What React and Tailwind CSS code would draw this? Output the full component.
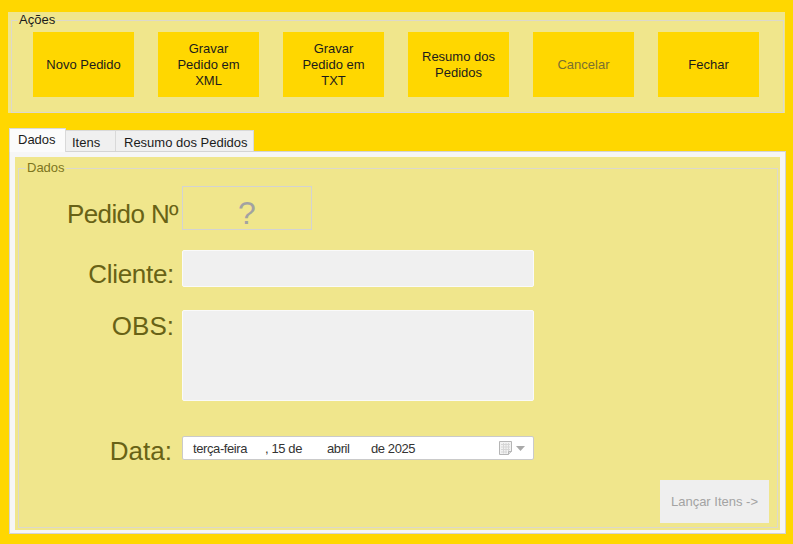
export default function App() {
  const buttons = [
    { lines: ["Novo Pedido"] },
    { lines: ["Gravar", "Pedido em", "XML"] },
    { lines: ["Gravar", "Pedido em", "TXT"] },
    { lines: ["Resumo dos", "Pedidos"] },
    { lines: ["Cancelar"], disabled: true },
    { lines: ["Fechar"] },
  ];
  return (
    <div className="w-[793px] h-[544px] bg-[#FFD700] font-['Liberation_Sans',Arial,sans-serif] text-[13px] text-[#1b1b1b] flex flex-col pt-[12px] pl-[8px] overflow-hidden">
      {/* Ações */}
      <div className="w-[777px] h-[101px] bg-[#F0E68C] pt-[8px] pl-[3px] shrink-0">
        <div className="relative w-[773px] h-[93px] border border-[#dcd9cc]">
          <span className="absolute left-[6px] top-[-9px] px-[1px] bg-[#F0E68C] leading-[15px] text-[#1b1b1b]">
            Ações
          </span>
          <div className="flex gap-[24px] pl-[21px] pt-[11px]">
            {buttons.map((b, i) => (
              <div
                key={i}
                className={
                  "w-[101px] h-[65px] bg-[#FFD700] flex flex-col items-center justify-center text-center leading-[16px] " +
                  (b.disabled ? "text-[#7a7030]" : "text-[#1b1b1b]")
                }
              >
                {b.lines.map((l, j) => (
                  <span key={j}>{l}</span>
                ))}
              </div>
            ))}
          </div>
        </div>
      </div>

      {/* Tabs */}
      <div className="mt-[15px] ml-[1px] flex items-end h-[23px] relative z-10 shrink-0">
        <div className="w-[57px] h-[24px] mb-[-1px] bg-[#fbfbfb] border border-b-0 border-[#d9d9d9] pl-[8px] pt-[3px] leading-[15px]">
          Dados
        </div>
        <div className="w-[50px] h-[21px] bg-[#f0f0f0] border-t border-r border-[#d9d9d9] pl-[6px] pt-[4px] leading-[15px]">
          Itens
        </div>
        <div className="w-[138px] h-[21px] bg-[#f0f0f0] border-t border-r border-[#d9d9d9] pl-[8px] pt-[4px] leading-[15px]">
          Resumo dos Pedidos
        </div>
      </div>

      {/* Tab panel */}
      <div className="ml-[1px] w-[777px] h-[383px] border border-[#d4d4d4] bg-[#f6f6f6] pt-[5px] pl-[5px] pr-[5px] pb-[3px] shrink-0">
        <div className="w-full h-full bg-[#F0E68C] pt-[11px] pl-[3px]">
          <div className="relative w-[760px] h-[360px] border border-[#dcd9cc] flex flex-col">
            <span className="absolute left-[7px] top-[-9px] px-[1px] bg-[#F0E68C] leading-[15px] text-[#7d7520]">
              Dados
            </span>

            {/* Pedido Nº */}
            <div className="flex mt-[17px]">
              <div className="w-[159px] text-right text-[26px] leading-[26px] tracking-[-0.6px] text-[#686216] mt-[15px]">
                Pedido Nº
              </div>
              <div className="ml-[4px] w-[130px] h-[44px] border border-[#d3d3d3] flex items-center justify-center pt-[10px] text-[32px] leading-[32px] text-[#a2a2a2]">
                ?
              </div>
            </div>

            {/* Cliente */}
            <div className="flex mt-[20px]">
              <div className="w-[159px] pr-[4px] text-right text-[26px] leading-[26px] tracking-[-0.3px] text-[#686216] mt-[11px]">
                Cliente:
              </div>
              <div className="ml-[4px] w-[352px] h-[37px] bg-[#f0f0f0] border border-[#fafafa] rounded-[2px]" />
            </div>

            {/* OBS */}
            <div className="flex mt-[23px]">
              <div className="w-[159px] pr-[4px] text-right text-[26px] leading-[26px] text-[#686216] mt-[3px]">
                OBS:
              </div>
              <div className="ml-[4px] w-[352px] h-[91px] bg-[#f0f0f0] border border-[#fafafa] rounded-[2px]" />
            </div>

            {/* Data */}
            <div className="flex mt-[35px] h-[28px]">
              <div className="w-[159px] pr-[6px] text-right text-[26px] leading-[26px] text-[#686216] mt-[2px]">
                Data:
              </div>
              <div className="ml-[4px] w-[352px] h-[24px] bg-white border border-[#cacaca] rounded-[2px] flex items-center pl-[10px] text-[13px] text-[#333] leading-[15px]">
                <span className="inline-block w-[72px] tracking-[-0.4px]">terça-feira</span>
                <span className="inline-block w-[62px] tracking-[-0.4px]">, 15 de</span>
                <span className="inline-block w-[44px] tracking-[-0.4px]">abril</span>
                <span className="inline-block tracking-[-0.4px]">de 2025</span>
                <div className="ml-auto mr-[8px] flex items-center gap-[3px]">
                  <svg width="14" height="15" viewBox="0 0 14 15">
                    <path d="M0.5 0.5 H12.5 V10.5 L9.5 13.5 H0.5 Z" fill="#f2f2f2" stroke="#b5b5b5" />
                    <path d="M2 3.5 H11 M2 6 H11 M2 8.5 H11 M2 11 H8 M4.5 2 V12.5 M7 2 V12.5 M9.5 2 V10.5" stroke="#d6d6d6" strokeWidth="1" />
                    <path d="M9.5 13.5 V10.5 H12.5" fill="#dcdcdc" stroke="#b5b5b5" />
                  </svg>
                  <svg width="9" height="5" viewBox="0 0 9 5">
                    <path d="M0 0 H9 L4.5 5 Z" fill="#a9a9a9" />
                  </svg>
                </div>
              </div>
            </div>

            {/* Lançar Itens */}
            <div className="flex justify-end pr-[8px] mt-[16px]">
              <div className="w-[109px] h-[43px] bg-[#efefef] flex items-center justify-center text-[13px] text-[#a3a3a3] leading-[15px]">
                Lançar Itens -&gt;
              </div>
            </div>
          </div>
        </div>
      </div>
    </div>
  );
}
